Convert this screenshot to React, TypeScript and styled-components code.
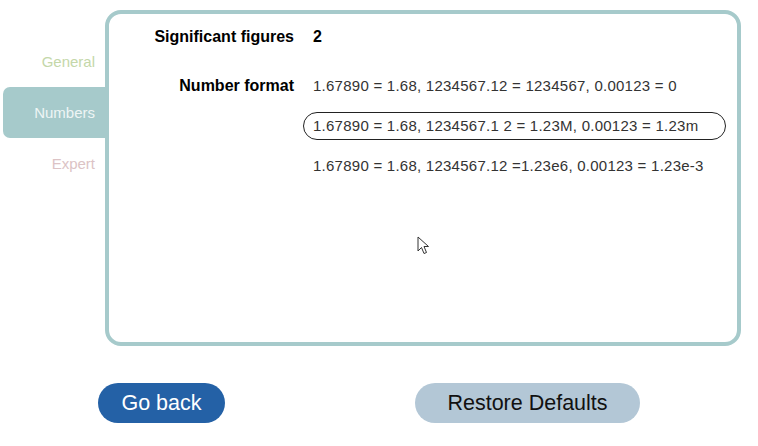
import React from "react";
import styled, { createGlobalStyle } from "styled-components";

const Global = createGlobalStyle`
  html, body { margin: 0; padding: 0; background: #ffffff; }
  body { font-family: "Liberation Sans", Arial, sans-serif; }
`;

const Page = styled.div`
  position: relative;
  width: 758px;
  height: 446px;
  background: #fff;
  overflow: hidden;
`;

const Top = styled.div`
  display: flex;
  padding-top: 10px;
`;

const Sidebar = styled.div`
  width: 102px;
  padding-left: 3px;
  padding-top: 26px;
  display: flex;
  flex-direction: column;
`;

const Tab = styled.div<{ $active?: boolean; $color: string }>`
  height: 51px;
  display: flex;
  align-items: center;
  justify-content: flex-end;
  padding-right: 10px;
  font-size: 15px;
  color: ${(p) => p.$color};
  background: ${(p) => (p.$active ? "#a6cacb" : "transparent")};
  border-radius: 7px 0 0 7px;
`;

const Panel = styled.div`
  width: 628px;
  height: 319px;
  border: 4px solid #a6cacb;
  border-radius: 16px;
  background: #fff;
  display: grid;
  grid-template-columns: 185px 1fr;
  grid-auto-rows: min-content;
  column-gap: 9px;
  padding-top: 9px;
  box-sizing: content-box;
`;

const Label = styled.div<{ $mt?: number }>`
  text-align: right;
  font-weight: bold;
  font-size: 16px;
  color: #000;
  height: 28px;
  line-height: 28px;
  margin-top: ${(p) => p.$mt ?? 0}px;
`;

const Value = styled.div<{ $mt?: number }>`
  font-weight: bold;
  font-size: 16px;
  color: #000;
  height: 28px;
  line-height: 28px;
  padding-left: 10px;
  margin-top: ${(p) => p.$mt ?? 0}px;
`;

const Options = styled.div`
  margin-top: 21px;
  display: flex;
  flex-direction: column;
  gap: 12px;
`;

const Option = styled.div<{ $selected?: boolean }>`
  width: 412px;
  height: 26px;
  line-height: 26px;
  padding-left: 9px;
  font-size: 15px;
  letter-spacing: 0.25px;
  color: #333;
  white-space: nowrap;
  border: 1px solid ${(p) => (p.$selected ? "#222" : "transparent")};
  border-radius: 14px;
`;

const Buttons = styled.div`
  display: flex;
  padding-left: 98px;
  margin-top: 37px;
  gap: 190px;
`;

const Button = styled.button<{ $primary?: boolean; $w: number }>`
  width: ${(p) => p.$w}px;
  height: 40px;
  border: none;
  border-radius: 20px;
  font-family: "Liberation Sans", Arial, sans-serif;
  font-size: 21.5px;
  padding: 0;
  color: ${(p) => (p.$primary ? "#ffffff" : "#111")};
  background: ${(p) => (p.$primary ? "#2461a6" : "#b3c7d6")};
`;

const Cursor = styled.svg`
  position: absolute;
  left: 417px;
  top: 236px;
`;

const options = [
  "1.67890 = 1.68, 1234567.12 = 1234567, 0.00123 = 0",
  "1.67890 = 1.68, 1234567.1 2 = 1.23M, 0.00123 = 1.23m",
  "1.67890 = 1.68, 1234567.12 =1.23e6, 0.00123 = 1.23e-3",
];

export default function App() {
  return (
    <Page>
      <Global />
      <Top>
        <Sidebar>
          <Tab $color="#c4d7a9">General</Tab>
          <Tab $active $color="#eef5f5">Numbers</Tab>
          <Tab $color="#dcc3c5">Expert</Tab>
        </Sidebar>
        <Panel>
          <Label>Significant figures</Label>
          <Value>2</Value>
          <Label $mt={21}>Number format</Label>
          <Options>
            {options.map((o, i) => (
              <Option key={i} $selected={i === 1}>
                {o}
              </Option>
            ))}
          </Options>
        </Panel>
      </Top>
      <Buttons>
        <Button $primary $w={127}>Go back</Button>
        <Button $w={225}>Restore Defaults</Button>
      </Buttons>
      <Cursor width="14" height="20" viewBox="0 0 14 20">
        <path
          d="M1 1 L1 15 L4.5 11.5 L7 17.5 L9.5 16.5 L7 10.5 L11.5 10.5 Z"
          fill="#fff"
          stroke="#333"
          strokeWidth="1"
          strokeLinejoin="round"
        />
      </Cursor>
    </Page>
  );
}
